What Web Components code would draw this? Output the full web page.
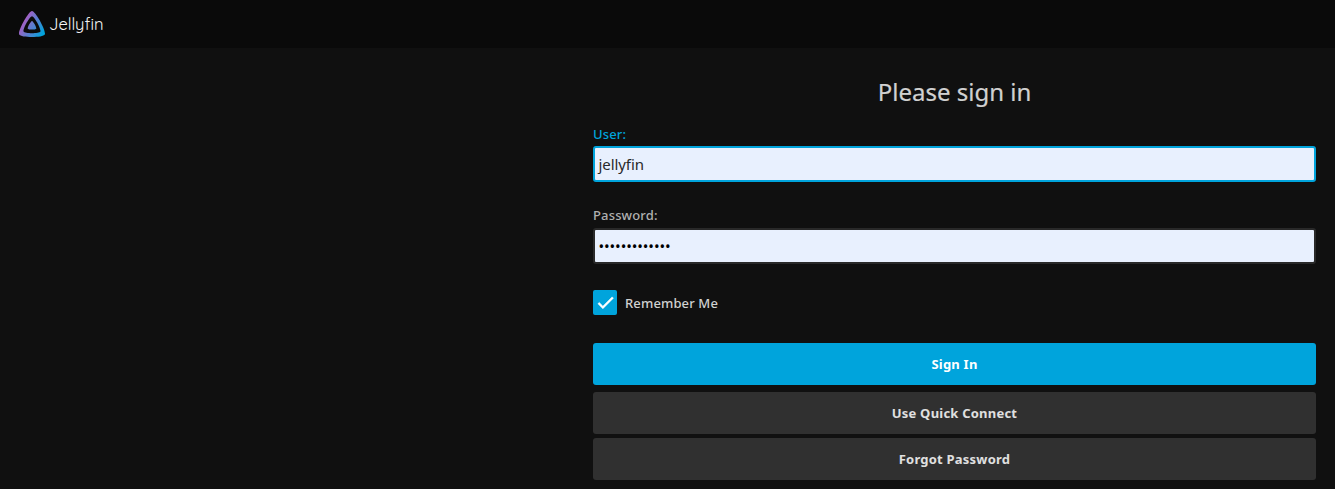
<!DOCTYPE html>
<html lang="en">
<head>
<meta charset="utf-8">
<title>Jellyfin</title>
<style>
html, body { margin: 0; height: 100%; background: #101010; overflow: hidden; }
body { font-family: "Noto Sans", sans-serif; color: #d1d1d1; }
</style>
</head>
<body>
<jf-page>
  <jf-header slot="header">Jellyfin</jf-header>
  <jf-login>
    <span slot="title">Please sign in</span>
    <jf-field class="focused" type="text" value="jellyfin">User:</jf-field>
    <jf-field type="password" value="•••••••••••••">Password:</jf-field>
    <jf-checkbox>Remember Me</jf-checkbox>
    <jf-button class="submit">Sign In</jf-button>
    <jf-button>Use Quick Connect</jf-button>
    <jf-button>Forgot Password</jf-button>
  </jf-login>
</jf-page>
<script>
function define(name, html) {
  customElements.define(name, class extends HTMLElement {
    constructor() {
      super();
      const root = this.attachShadow({ mode: 'open' });
      root.innerHTML = html;
      const value = root.querySelector('.value');
      if (value) value.textContent = this.getAttribute('value');
    }
  });
}

define('jf-page', `
<style>
:host { display: flex; flex-direction: column; height: 489px; }
main { display: flex; justify-content: flex-end; padding-right: 19px; }
</style>
<slot name="header"></slot>
<main><slot></slot></main>`);

define('jf-header', `
<style>
:host { display: flex; align-items: center; box-sizing: border-box; height: 48px; padding: 0 19px; background: #0a0a0a; color: #f4f4f4; }
svg { width: 26px; height: 26px; flex: none; }
.name { font: 400 16.5px/24px Quicksand, Lato, sans-serif; margin-left: 4px; letter-spacing: 0; font-variant-ligatures: none; }
</style>
<svg viewBox="0 0 24 24" aria-hidden="true">
  <defs><linearGradient id="g" gradientUnits="userSpaceOnUse" x1="3" y1="10" x2="22" y2="21"><stop offset="0" stop-color="#aa5cc3"/><stop offset="1" stop-color="#00a4dc"/></linearGradient></defs>
  <path fill="url(#g)" d="M12 .002C8.826.002-1.398 18.537.16 21.666c1.56 3.129 22.14 3.094 23.682 0C25.384 18.573 15.177 0 12 0zm7.76 18.949c-1.008 2.028-14.493 2.05-15.514 0C3.224 16.9 9.92 4.755 12.003 4.755c2.081 0 8.77 12.166 7.759 14.196zM12 9.198c-1.054 0-4.446 6.15-3.93 7.189.518 1.04 7.348 1.027 7.86 0 .511-1.027-2.874-7.19-3.93-7.19z"/>
</svg>
<span class="name"><slot></slot></span>`);

define('jf-login', `
<style>
:host { display: flex; flex-direction: column; width: 723px; }
h1 { font-size: 24px; line-height: 34px; font-weight: 400; text-align: center; margin: 27px 0 16px; -webkit-text-stroke: .2px; }
</style>
<h1><slot name="title"></slot></h1>
<slot></slot>`);

define('jf-field', `
<style>
:host { display: flex; flex-direction: column; margin-bottom: 24px; font-size: 13px; --edge: #292929; color: #b0b0b0; }
:host(.focused) { --edge: #00a4dc; color: #00a4dc; }
label { line-height: 18px; margin-bottom: 3px; font-weight: 500; letter-spacing: .15px; }
:host([type=password]) label { margin-bottom: 4px; }
.box { display: flex; align-items: center; box-sizing: border-box; height: 36px; border: 2px solid var(--edge); border-radius: 3px; background: #e8f0fe; padding: 0 3.5px; color: #292929; font-size: 15px; line-height: 20px; letter-spacing: -.08px; }
:host([type=password]) .box { color: #000; letter-spacing: -.1px; padding: 0 3.5px; }
</style>
<label><slot></slot></label>
<div class="box"><span class="value"></span></div>`);

define('jf-checkbox', `
<style>
:host { display: flex; align-items: center; height: 25px; margin: 2px 0 28px; font-size: 13px; font-weight: 500; letter-spacing: .13px; }
.box { width: 24px; height: 25px; background: #00a4dc; border-radius: 2px; margin-right: 8px; display: flex; align-items: center; justify-content: center; }
svg { width: 21px; height: 21px; }
</style>
<span class="box"><svg viewBox="0 0 24 24"><path fill="#fff" d="M9 16.17 4.83 12l-1.42 1.41L9 19 21 7l-1.41-1.41z" stroke="#fff" stroke-width=".7"/></svg></span>
<slot></slot>`);

define('jf-button', `
<style>
:host { display: flex; align-items: center; justify-content: center; height: 42px; flex: none; margin-bottom: 4px; border-radius: 3px; background: #303030; color: #e0e0e0; font-size: 13px; font-weight: 700; letter-spacing: .22px; }
:host(.submit) { background: #00a4dc; color: #fff; margin-bottom: 7px; }
</style>
<slot></slot>`);
</script>
</body>
</html>
